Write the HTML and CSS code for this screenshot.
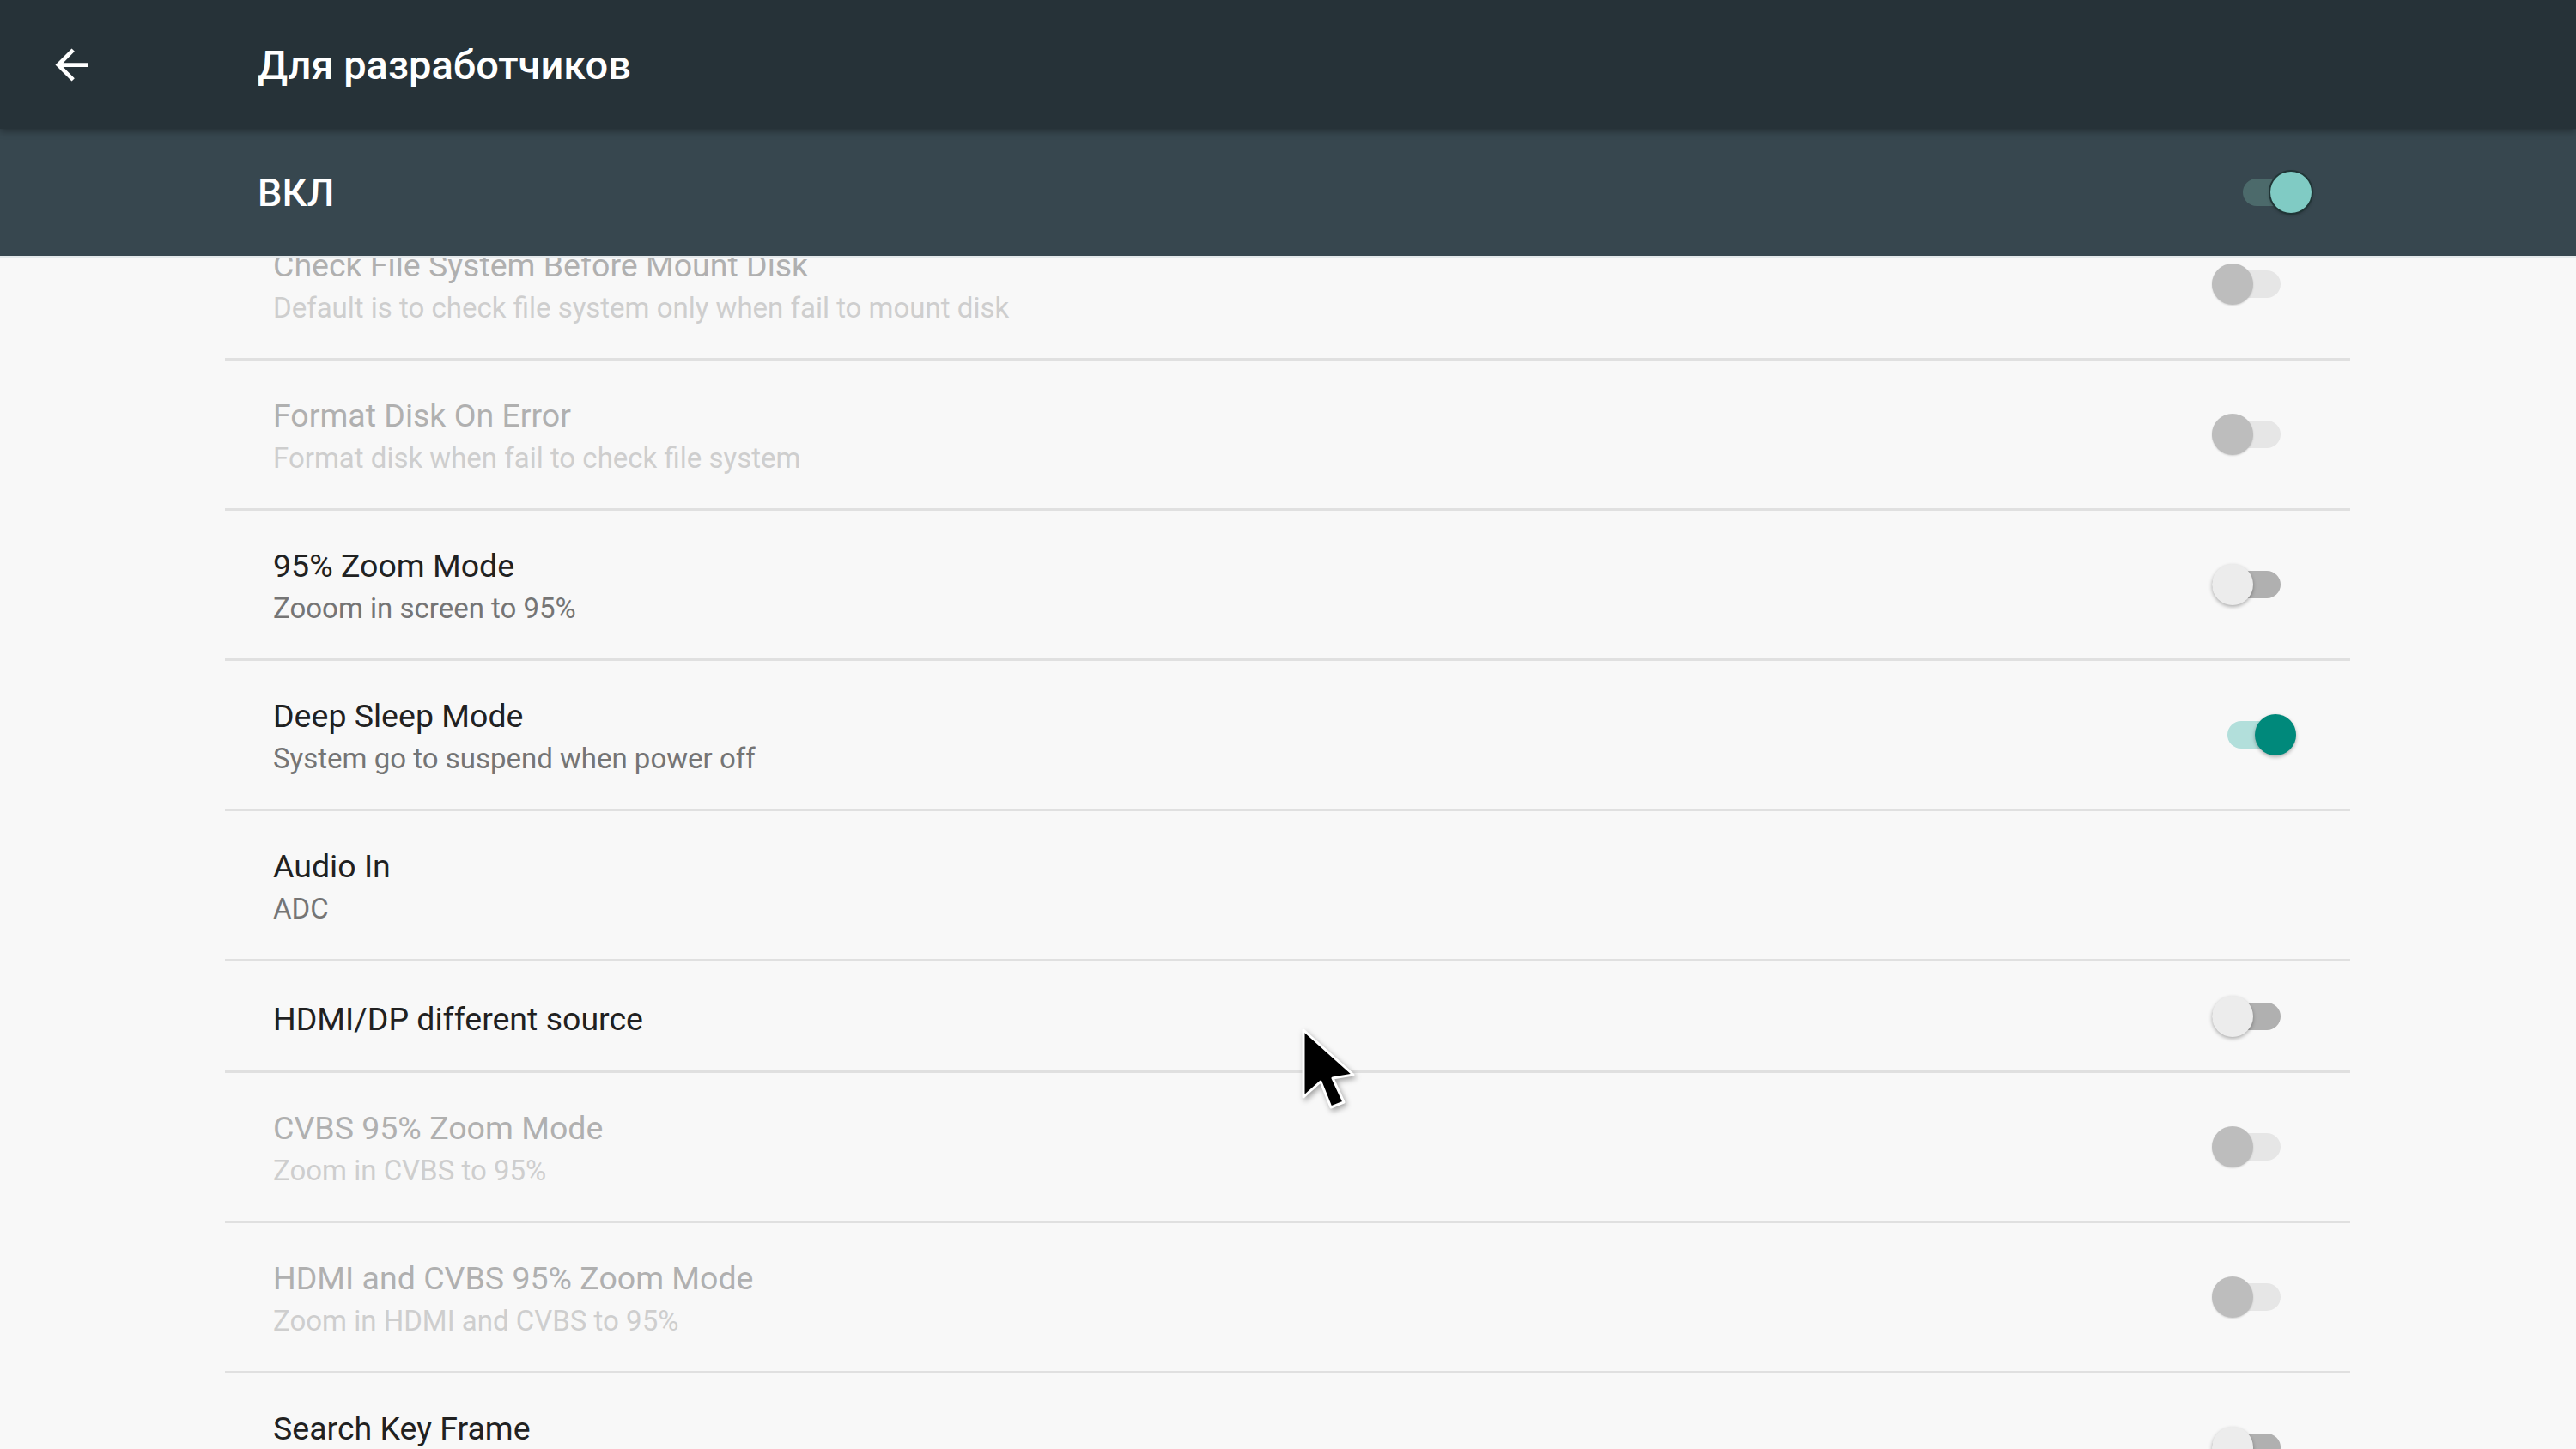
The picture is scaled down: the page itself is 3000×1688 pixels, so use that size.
FILE: index.html
```html
<!DOCTYPE html>
<html lang="ru">
<head>
    <meta charset="UTF-8">
    <title>Для разработчиков</title>
    <link rel="stylesheet" href="styles.css">
</head>
<body>
    <div class="screen">
        <header class="appbar">
            <svg class="back" viewBox="0 0 24 24"><path d="M20 11H7.83l5.59-5.59L12 4l-8 8 8 8 1.41-1.41L7.83 13H20v-2z"/></svg>
            <h1>Для разработчиков</h1>
        </header>
        <div class="masterbar">
            <span class="master-label">ВКЛ</span>
            <span class="switch switch-master"><span class="knob"></span></span>
        </div>

        <ul class="prefs">
            <li class="pref disabled">
                <div class="pref-text">
                    <div class="pref-title">Check File System Before Mount Disk</div>
                    <div class="pref-summary">Default is to check file system only when fail to mount disk</div>
                </div>
                <span class="switch"><span class="knob"></span></span>
            </li>
            <li class="pref disabled">
                <div class="pref-text">
                    <div class="pref-title">Format Disk On Error</div>
                    <div class="pref-summary">Format disk when fail to check file system</div>
                </div>
                <span class="switch"><span class="knob"></span></span>
            </li>
            <li class="pref">
                <div class="pref-text">
                    <div class="pref-title">95% Zoom Mode</div>
                    <div class="pref-summary">Zooom in screen to 95%</div>
                </div>
                <span class="switch"><span class="knob"></span></span>
            </li>
            <li class="pref">
                <div class="pref-text">
                    <div class="pref-title">Deep Sleep Mode</div>
                    <div class="pref-summary">System go to suspend when power off</div>
                </div>
                <span class="switch on"><span class="knob"></span></span>
            </li>
            <li class="pref">
                <div class="pref-text">
                    <div class="pref-title">Audio In</div>
                    <div class="pref-summary">ADC</div>
                </div>
            </li>
            <li class="pref single">
                <div class="pref-text">
                    <div class="pref-title">HDMI/DP different source</div>
                </div>
                <span class="switch"><span class="knob"></span></span>
            </li>
            <li class="pref disabled">
                <div class="pref-text">
                    <div class="pref-title">CVBS 95% Zoom Mode</div>
                    <div class="pref-summary">Zoom in CVBS to 95%</div>
                </div>
                <span class="switch"><span class="knob"></span></span>
            </li>
            <li class="pref disabled">
                <div class="pref-text">
                    <div class="pref-title">HDMI and CVBS 95% Zoom Mode</div>
                    <div class="pref-summary">Zoom in HDMI and CVBS to 95%</div>
                </div>
                <span class="switch"><span class="knob"></span></span>
            </li>
            <li class="pref cut">
                <div class="pref-text">
                    <div class="pref-title">Search Key Frame</div>
                </div>
                <span class="switch"><span class="knob"></span></span>
            </li>
        </ul>

        <!-- mouse pointer over the list -->
        <svg class="cursor" viewBox="0 0 70 100">
            <path d="M4 4 L4 82 L24 64 L36 94 L51 88 L38 60 L62 56 Z"/>
        </svg>
    </div>
</body>
</html>
```

FILE: styles.css
```css
body {
    margin: 0;
    background-color: #f8f8f8;
    font-family: Roboto, "Noto Sans", sans-serif;
}
.screen {
    position: relative;
    height: 1688px;
    overflow: hidden;
}
.appbar {
    position: relative;
    z-index: 2;
    height: 150px;
    display: flex;
    align-items: center;
    padding-left: 55px;
    background-color: #263238;
    box-shadow: 0 3px 8px rgba(0, 0, 0, 0.35);
}
.back {
    width: 57px;
    height: 57px;
    fill: #ffffff;
}
.appbar h1 {
    margin: 0 0 0 188px;
    color: #ffffff;
    font-size: 47px;
    font-weight: 500;
}
.masterbar {
    position: relative;
    z-index: 1;
    height: 148px;
    display: flex;
    align-items: center;
    justify-content: space-between;
    padding: 0 308px 0 300px;
    background-color: #37474f;
    border-bottom: 2px solid #e4e9eb;
}
.master-label {
    color: #ffffff;
    font-size: 45px;
    font-weight: 500;
}
.prefs {
    list-style: none;
    margin: -55px 263px 0 262px;
    padding: 0;
}
.pref {
    height: 172px;
    display: flex;
    align-items: center;
    padding: 0 81px 0 56px;
    border-bottom: 3px solid #e0e0e0;
}
.pref.single {
    height: 127px;
}
.pref-text {
    flex: 1;
    padding-top: 6px;
}
.pref.cut .pref-text {
    padding-bottom: 50px;
}
.pref-title {
    font-size: 37.5px;
    line-height: 50px;
    color: #212121;
}
.pref-summary {
    font-size: 33px;
    line-height: 50px;
    color: #757575;
}
.disabled .pref-title {
    color: #b0b0b0;
}
.disabled .pref-summary {
    color: #cecece;
}
.switch {
    position: relative;
    flex: none;
    width: 80px;
    height: 32px;
    border-radius: 16px;
    background-color: #b0b0b0;
}
.knob {
    position: absolute;
    top: -8px;
    left: 0;
    width: 48px;
    height: 48px;
    border-radius: 50%;
    background-color: #ececec;
    box-shadow: 0 2px 4px rgba(0, 0, 0, 0.3);
}
.switch.on {
    margin-right: -18px;
    background-color: #b2dfdb;
}
.switch.on .knob {
    left: auto;
    right: 0;
    background-color: #00897b;
}
.disabled .switch {
    background-color: #e6e6e6;
}
.disabled .knob {
    background-color: #bdbdbd;
    box-shadow: 0 1px 2px rgba(0, 0, 0, 0.15);
}
.switch-master {
    background-color: #4c6a6b;
}
.switch-master .knob {
    left: auto;
    right: 0;
    background-color: #80cbc4;
    box-shadow: 0 0 0 2px #203536, 0 2px 4px rgba(0, 0, 0, 0.4);
}
.cursor {
    position: absolute;
    left: 1514px;
    top: 1196px;
    width: 70px;
    height: 100px;
    fill: #000000;
    stroke: #ffffff;
    stroke-width: 3;
    stroke-linejoin: round;
    filter: drop-shadow(2px 3px 3px rgba(0, 0, 0, 0.35));
}
```
